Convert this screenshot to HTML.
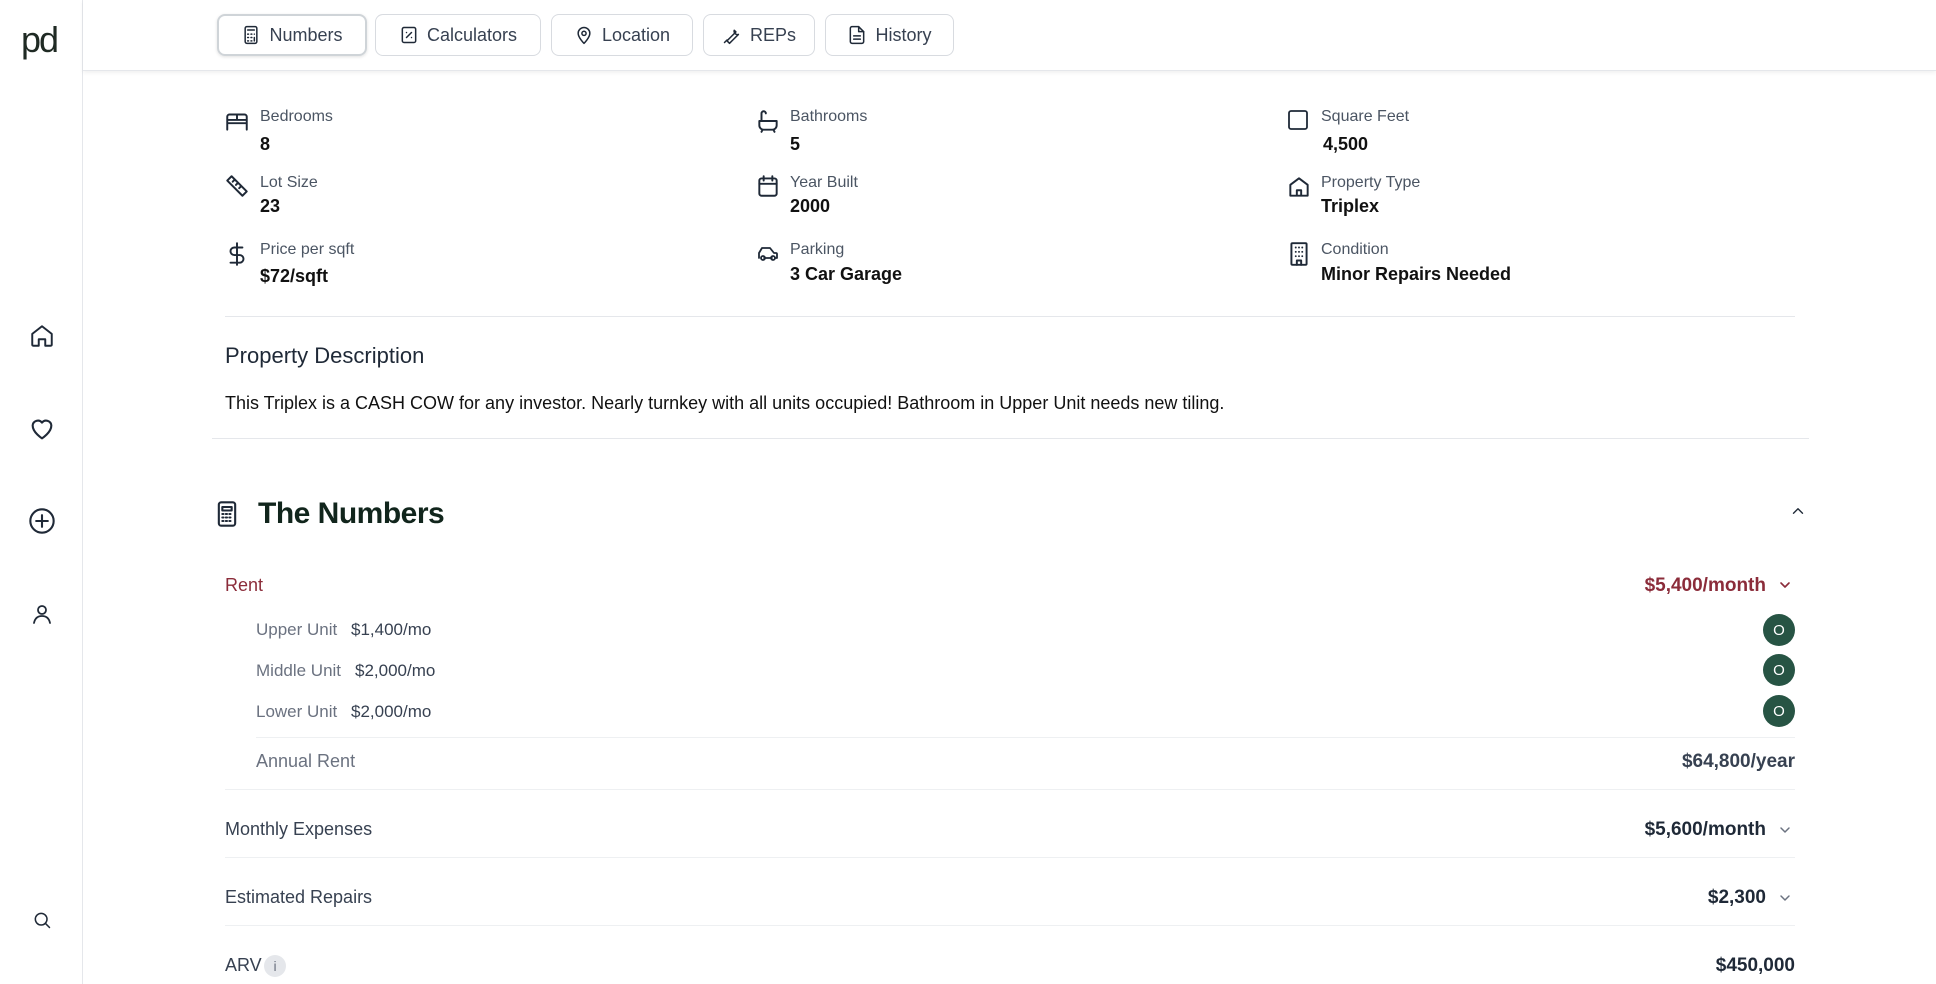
<!DOCTYPE html>
<html><head><meta charset="utf-8"><style>
*{box-sizing:border-box;margin:0;padding:0}
body{width:1936px;height:984px;overflow:hidden;background:#fff;font-family:"Liberation Sans",sans-serif;color:#111;position:relative}
.side{position:absolute;left:0;top:0;width:83px;height:984px;border-right:1px solid #e5e7eb;background:#fff}
.head{position:absolute;left:83px;top:0;right:0;height:71px;border-bottom:1px solid #e5e7eb;box-shadow:0 2px 4px rgba(0,0,0,.06);background:#fff}
.tab{position:absolute;top:14px;height:42px;border:1px solid #d8dbe0;border-radius:8px;display:flex;align-items:center;justify-content:center;gap:8px;font-size:18px;color:#374151}
.tab.act{border:2px solid #cfd4d8;box-shadow:0 1px 3px rgba(0,0,0,.12)}
.ic{position:absolute}
.abs{position:absolute;white-space:nowrap}
.lbl{font-size:16px;color:#4b5563}
.val{font-size:18px;font-weight:bold;color:#111}
.hr{position:absolute;height:1px;background:#e5e7eb}
.row{font-size:18px;color:#374151}
.amt{font-size:19px;font-weight:bold;color:#1f2937;text-align:right}
.sub{font-size:17px;color:#6b7280}
.subv{font-size:17px;color:#374151}
.badge{position:absolute;width:32px;height:32px;border-radius:50%;background:#275444;color:#fff;font-size:15px;display:flex;align-items:center;justify-content:center}
svg{fill:none;stroke:#1f2937;stroke-width:1.8;stroke-linecap:round;stroke-linejoin:round}
</style></head><body>
<div class="side">
 <div class="abs" style="left:21px;top:20px;font-size:36px;color:#1f2a24;letter-spacing:-2px;font-weight:300;line-height:40px">pd</div>
 <svg class="ic" style="left:29px;top:323px" width="26" height="26" viewBox="0 0 24 24"><path d="M3 10l9-7 9 7v10a1 1 0 0 1-1 1h-5v-6h-6v6H4a1 1 0 0 1-1-1z"/></svg>
 <svg class="ic" style="left:28px;top:415px" width="28" height="28" viewBox="0 0 24 24"><path d="M12 20s-8-5-8-11a4.5 4.5 0 0 1 8-2.5A4.5 4.5 0 0 1 20 9c0 6-8 11-8 11z"/></svg>
 <svg class="ic" style="left:28px;top:507px" width="28" height="28" viewBox="0 0 24 24"><circle cx="12" cy="12" r="10"/><path d="M12 7v10M7 12h10"/></svg>
 <svg class="ic" style="left:30px;top:602px" width="24" height="24" viewBox="0 0 24 24"><circle cx="12" cy="8" r="4"/><path d="M4 21c1-5 4-7 8-7s7 2 8 7"/></svg>
 <svg class="ic" style="left:32px;top:910px" width="20" height="20" viewBox="0 0 24 24"><circle cx="11" cy="11" r="7"/><path d="M16 16l5 5"/></svg>
</div>
<div class="head"></div>
<div class="tab act" style="left:217px;width:150px"><svg width="20" height="20" viewBox="0 0 24 24"><rect x="5" y="2" width="14" height="20" rx="2"/><path d="M8 6h8M8 11h1M12 11h1M16 11h0M8 15h1M12 15h1M8 19h1M12 19h1M16 15v4"/></svg>Numbers</div>
<div class="tab" style="left:375px;width:166px"><svg width="20" height="20" viewBox="0 0 24 24"><rect x="4" y="3" width="16" height="18" rx="2"/><path d="M9 15l6-6M9 9h0M15 15h0"/></svg>Calculators</div>
<div class="tab" style="left:551px;width:142px"><svg width="20" height="20" viewBox="0 0 24 24"><path d="M12 22s7-7 7-12a7 7 0 0 0-14 0c0 5 7 12 7 12z"/><circle cx="12" cy="10" r="2.5"/></svg>Location</div>
<div class="tab" style="left:703px;width:112px"><svg width="20" height="20" viewBox="0 0 24 24"><path d="M14.7 6.3a4 4 0 0 0 5 5L13 18l-4 4-3-3 4-4 6.7-6.7zM3 21l3-3"/></svg>REPs</div>
<div class="tab" style="left:825px;width:129px"><svg width="20" height="20" viewBox="0 0 24 24"><path d="M14 2H6a2 2 0 0 0-2 2v16a2 2 0 0 0 2 2h12a2 2 0 0 0 2-2V8z"/><path d="M14 2v6h6M8 13h8M8 17h8"/></svg>History</div>

<svg class="ic" style="left:224px;top:108px" width="26" height="26" viewBox="0 0 24 24"><path d="M3 20V8a2 2 0 0 1 2-2h14a2 2 0 0 1 2 2v12M3 14h18M3 11h18M12 6v5"/></svg>
<div class="abs lbl" style="left:260px;top:108px">Bedrooms</div><div class="abs val" style="left:260px;top:134px">8</div>
<svg class="ic" style="left:755px;top:108px" width="26" height="26" viewBox="0 0 24 24"><path d="M4 12h16v4a4 4 0 0 1-4 4H8a4 4 0 0 1-4-4zM6 12V5a2 2 0 0 1 4 0M7 20l-1 2M17 20l1 2"/></svg>
<div class="abs lbl" style="left:790px;top:108px">Bathrooms</div><div class="abs val" style="left:790px;top:134px">5</div>
<svg class="ic" style="left:1286px;top:108px" width="24" height="24" viewBox="0 0 24 24"><rect x="3" y="3" width="18" height="18" rx="2"/></svg>
<div class="abs lbl" style="left:1321px;top:108px">Square Feet</div><div class="abs val" style="left:1323px;top:134px">4,500</div>

<svg class="ic" style="left:224px;top:173px" width="26" height="26" viewBox="0 0 24 24"><path d="M3 7l4-4 14 14-4 4zM8 8l2-2M11 11l2-2M14 14l2-2"/></svg>
<div class="abs lbl" style="left:260px;top:174px">Lot Size</div><div class="abs val" style="left:260px;top:196px">23</div>
<svg class="ic" style="left:755px;top:173px" width="26" height="26" viewBox="0 0 24 24"><rect x="4" y="5" width="16" height="16" rx="2"/><path d="M4 10h16M8 3v4M16 3v4"/></svg>
<div class="abs lbl" style="left:790px;top:174px">Year Built</div><div class="abs val" style="left:790px;top:196px">2000</div>
<svg class="ic" style="left:1286px;top:174px" width="26" height="26" viewBox="0 0 24 24"><path d="M4 10l8-6 8 6v10H4zM10 20v-5h4v5"/></svg>
<div class="abs lbl" style="left:1321px;top:174px">Property Type</div><div class="abs val" style="left:1321px;top:196px">Triplex</div>

<svg class="ic" style="left:224px;top:240px" width="26" height="28" viewBox="0 0 24 24"><path d="M12 2v20M17 6H9.5a3.5 3.5 0 0 0 0 7h5a3.5 3.5 0 0 1 0 7H6"/></svg>
<div class="abs lbl" style="left:260px;top:241px">Price per sqft</div><div class="abs val" style="left:260px;top:266px">$72/sqft</div>
<svg class="ic" style="left:754px;top:242px" width="28" height="24" viewBox="0 0 24 24"><path d="M3 16v-5l3-5h8l4 5h2a1 1 0 0 1 1 1v4h-2M8 16h8"/><circle cx="7" cy="16" r="2"/><circle cx="17" cy="16" r="2"/></svg>
<div class="abs lbl" style="left:790px;top:241px">Parking</div><div class="abs val" style="left:790px;top:264px">3 Car Garage</div>
<svg class="ic" style="left:1286px;top:240px" width="26" height="28" viewBox="0 0 24 24"><rect x="5" y="2" width="14" height="20" rx="1"/><path d="M9 6h0M12 6h0M15 6h0M9 10h0M12 10h0M15 10h0M9 14h0M12 14h0M15 14h0M10 22v-4h4v4"/></svg>
<div class="abs lbl" style="left:1321px;top:241px">Condition</div><div class="abs val" style="left:1321px;top:264px">Minor Repairs Needed</div>

<div class="hr" style="left:225px;width:1570px;top:316px"></div>
<div class="abs" style="left:225px;top:343px;font-size:22px;color:#1f2937">Property Description</div>
<div class="abs" style="left:225px;top:393px;font-size:18px;color:#111">This Triplex is a CASH COW for any investor. Nearly turnkey with all units occupied! Bathroom in Upper Unit needs new tiling.</div>
<div class="hr" style="left:212px;width:1597px;top:438px"></div>

<svg class="ic" style="left:213px;top:498px" width="28" height="32" viewBox="0 0 24 24"><rect x="5" y="2" width="14" height="20" rx="2"/><path d="M8 6h8v3H8zM8 12h1M11 12h1M14 12h1M8 15h1M11 15h1M14 15h1M8 18h1M11 18h1M14 18h1"/></svg>
<div class="abs" style="left:258px;top:497px;font-size:30px;font-weight:bold;color:#11251c;letter-spacing:-.5px">The Numbers</div>
<svg class="ic" style="left:1789px;top:502px" width="18" height="18" viewBox="0 0 24 24"><path d="M6 15l6-6 6 6"/></svg>

<div class="abs row" style="left:225px;top:575px;color:#8b2c3a">Rent</div>
<div class="abs amt" style="right:170px;top:575px;color:#8b2c3a">$5,400/month</div>
<svg class="ic" style="left:1777px;top:577px;stroke:#8b2c3a;stroke-width:2.4" width="16" height="16" viewBox="0 0 24 24"><path d="M6 9l6 6 6-6"/></svg>

<div class="abs sub" style="left:256px;top:620px">Upper Unit</div><div class="abs subv" style="left:351px;top:620px">$1,400/mo</div>
<div class="abs sub" style="left:256px;top:661px">Middle Unit</div><div class="abs subv" style="left:355px;top:661px">$2,000/mo</div>
<div class="abs sub" style="left:256px;top:702px">Lower Unit</div><div class="abs subv" style="left:351px;top:702px">$2,000/mo</div>
<div class="badge" style="left:1763px;top:614px">O</div>
<div class="badge" style="left:1763px;top:654px">O</div>
<div class="badge" style="left:1763px;top:695px">O</div>
<div class="hr" style="left:256px;width:1539px;top:737px;background:#eef0f2"></div>
<div class="abs row" style="left:256px;top:751px;color:#6b7280">Annual Rent</div>
<div class="abs amt" style="right:141px;top:751px;color:#374151">$64,800/year</div>
<div class="hr" style="left:225px;width:1570px;top:789px;background:#eef0f2"></div>
<div class="abs row" style="left:225px;top:819px">Monthly Expenses</div>
<div class="abs amt" style="right:170px;top:819px">$5,600/month</div>
<svg class="ic" style="left:1777px;top:822px;stroke:#6b7280;stroke-width:2.2" width="16" height="16" viewBox="0 0 24 24"><path d="M6 9l6 6 6-6"/></svg>
<div class="hr" style="left:225px;width:1570px;top:857px;background:#eef0f2"></div>
<div class="abs row" style="left:225px;top:887px">Estimated Repairs</div>
<div class="abs amt" style="right:170px;top:887px">$2,300</div>
<svg class="ic" style="left:1777px;top:890px;stroke:#6b7280;stroke-width:2.2" width="16" height="16" viewBox="0 0 24 24"><path d="M6 9l6 6 6-6"/></svg>
<div class="hr" style="left:225px;width:1570px;top:925px;background:#eef0f2"></div>
<div class="abs row" style="left:225px;top:955px">ARV</div>
<div class="abs" style="left:264px;top:955px;width:22px;height:22px;border-radius:50%;background:#e5e7eb;color:#6b7280;font-size:14px;text-align:center;line-height:22px">i</div>
<div class="abs amt" style="right:141px;top:955px">$450,000</div>
</body></html>
